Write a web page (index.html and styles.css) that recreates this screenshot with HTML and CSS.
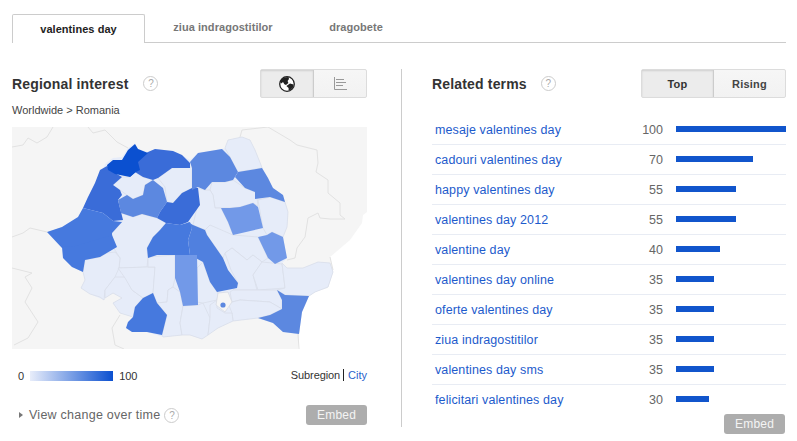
FILE: index.html
```html
<!DOCTYPE html>
<html lang="en">
<head>
<meta charset="utf-8">
<title>Interest</title>
<link rel="stylesheet" href="styles.css">
</head>
<body>
<div class="tabs">
  <div class="tab active">valentines day</div>
  <div class="tab second">ziua indragostitilor</div>
  <div class="tab third">dragobete</div>
</div>
<div class="panels">
  <section class="left">
    <div class="head">
      <h2>Regional interest</h2>
      <span class="help help-head">?</span>
      <div class="toggle toggle-map">
        <div class="seg seg-on seg-icon">
          <svg width="16" height="16" viewBox="0 0 16 16"><circle cx="8" cy="8" r="7.3" fill="#fff" stroke="#222" stroke-width="1.3"/><path d="M2 4 5 1.4 9.5 1 10 3 8.6 5 9.4 7 7 9 5.4 8.2 4 6 2.4 7.4 1.4 6Z" fill="#222"/><path d="M7.4 10 11 7.6 14.6 8.4 14 11.6 11.4 14 9.6 14.6 9.6 12Z" fill="#222"/></svg>
        </div>
        <div class="seg seg-icon">
          <svg width="13" height="13" viewBox="0 0 13 13"><path d="M.5 0V12.5H13M2 2.5H10M2 5.5H12M2 8.5H9" fill="none" stroke="#999" stroke-width="1"/></svg>
        </div>
      </div>
    </div>
    <div class="crumb">Worldwide &gt; Romania</div>
    <svg class="map" width="355" height="222" viewBox="12 127 355 222">
      <rect x="12" y="127" width="355" height="222" fill="#f5f5f5"/>
      <path class="sea" d="M367 212 363 215 362 223 350 240 330 257 333 270 328 288 315 292 309 296 302 312 299 334 298 349H367Z"/>
      <g class="borders">
        <path d="M12 147 23 145 28 138 37 143 47 137 53 127"/>
        <path d="M88 127 93 133 105 130 117 142 128 148"/>
        <path d="M12 237 23 233 30 228 47 232"/>
        <path d="M240 137 242 130 268 127 290 140 297 145 317 150 318 163 316 172 328 180 328 193 340 203 340 215 345 219 330 219 320 218 318 213 308 218 305 237 297 248 295 258 287 260"/>
        <path d="M12 268 32 273 25 277 32 288 25 302 38 322 28 338 14 345"/>
        <path d="M120 315 112 328 115 345 124 349"/>
        <path d="M298 334 299 349"/>
        <path d="M330 257 333 270"/>
      </g>
      <path class="base" d="M106 163 113 158 122 157 128 148 135 143 138 149 148 152 155 149 173 151 182 155 190 160 198 153 222 149 225 148 228 140 242 137 250 140 255 150 261 165 268 178 273 188 283 195 285 202 288 212 287 227 283 237 287 258 282 263 287 268 303 268 318 262 330 263 333 272 328 287 315 292 309 296 302 312 299 334 283 332 273 323 258 318 233 321 218 328 208 335 202 339 190 335 182 335 163 337 147 332 132 332 126 328 128 322 133 317 120 313 113 303 122 298 113 293 105 298 104 300 90 294 81 288 85 280 83 272 72 267 63 258 62 248 47 232 62 227 78 217 83 208 88 197 95 183 102 170Z"/>
      <g class="light">
        <path d="M113 185 122 177 130 177 135 172 143 177 153 180 145 185 143 195 133 199 127 195 120 190Z"/>
        <path d="M158 178 172 168 192 167 192 188 182 193 173 203 167 202 165 187Z"/>
        <path d="M225 148 228 140 242 137 250 140 255 150 261 165 262 168 238 172 230 157Z"/>
        <path d="M210 190 212 182 225 182 233 180 245 188 255 192 257 198 258 206 253 203 240 207 230 208 221 208 215 208 213 195Z"/>
        <path d="M258 200 270 197 285 202 288 212 287 227 283 237 272 232 267 235 263 228Z"/>
        <path d="M198 188 205 190 210 190 213 195 215 208 221 208 228 222 233 235 207 235 210 225 205 230 193 225 198 203Z"/>
        <path d="M205 230 210 225 233 235 258 237 268 258 262 262 253 255 247 260 232 248 225 253 223 258 207 235Z"/>
        <path d="M121 213 133 217 142 214 157 218 166 223 160 230 153 237 147 248 148 258 147 267 119 268 120 258 113 247 112 233 122 222Z"/>
        <path d="M85 260 100 257 107 253 115 252 120 258 119 268 115 277 105 290 104 300 100 297 90 294 81 288 85 280 83 272Z"/>
        <path d="M115 277 125 277 132 290 143 298 135 307 133 317 120 313 113 303 122 298 113 293 105 298 105 290Z"/>
        <path d="M118 268 147 267 155 267 153 293 143 298 132 290 125 278Z"/>
        <path d="M148 267 148 257 175 255 175 278 173 287 168 290 167 302 157 303 153 293 155 267Z"/>
        <path d="M157 303 167 302 168 290 173 287 180 292 183 306 180 323 182 335 163 337 162 335 167 315Z"/>
        <path d="M183 306 198 305 203 303 210 318 208 335 202 339 190 335 182 335 180 323Z"/>
        <path d="M197 268 203 262 210 282 217 292 218 293 217 300 203 303 197 302Z"/>
        <path d="M231 270 225 253 232 248 247 260 253 255 262 262 253 275 257 290 233 290 238 283Z"/>
        <path d="M253 275 262 262 282 264 285 288 258 290Z"/>
        <path d="M282 263 287 268 303 268 318 262 330 263 333 272 328 287 315 292 309 296 285 295 277 290 285 288Z"/>
        <path d="M230 292 233 290 277 290 282 300 282 309 270 302 240 300 232 302Z"/>
        <path d="M228 303 232 302 240 300 270 302 282 309 270 315 258 318 233 321 232 313Z"/>
        <path d="M210 305 217 300 217 308 225 313 232 313 233 321 218 328 208 335 210 318Z"/>
      </g>
      <path class="city" d="M216 305 218 293 228 292 232 302 225 312Z"/>
      <circle class="c60" cx="223" cy="305" r="2.6"/>
      <path class="c80" d="M148 152 155 149 173 151 182 155 190 163 190 168 172 168 158 178 153 180 143 177 135 172 130 177 137 160Z"/>
      <path class="c80" d="M100 170 107 166 115 173 122 177 113 185 120 190 122 195 118 200 123 220 113 221 103 213 83 208 88 197 95 183Z"/>
      <path class="c100" d="M107 165 113 160 122 160 128 150 135 144 138 149 148 153 138 162 140 170 136 172 130 177 115 174 108 170Z"/>
      <path class="c70" d="M83 208 103 213 113 221 122 222 112 233 112 236 75 247 62 248 47 232 62 227 78 217Z"/>
      <path class="c70" d="M62 247 75 246 112 235 117 247 100 257 85 260 83 272 72 267 63 258Z"/>
      <path class="c60" d="M118 200 127 195 133 199 143 195 145 185 153 180 163 188 167 202 160 212 157 218 142 214 133 217 121 213Z"/>
      <path class="c80" d="M160 212 167 202 173 203 182 193 192 188 198 188 200 205 188 222 180 225 166 223 157 218Z"/>
      <path class="c70" d="M166 223 180 225 190 222 192 228 188 240 190 255 177 255 157 255 148 258 147 248 153 237 160 230Z"/>
      <path class="c65" d="M188 222 193 225 205 230 207 235 223 258 228 270 238 283 237 288 217 292 210 282 203 262 190 255 188 240 192 228Z"/>
      <path class="c60" d="M190 162 198 153 222 149 230 157 238 172 233 180 225 182 212 182 205 190 198 187 192 190 192 168Z"/>
      <path class="c60" d="M238 172 262 168 268 178 273 188 283 195 285 202 270 197 255 199 255 192 245 188 235 177Z"/>
      <path class="c45" d="M221 208 230 208 240 207 253 203 258 207 263 228 233 235 228 222Z"/>
      <path class="c45" d="M258 237 267 235 272 232 283 237 287 258 275 264 268 258Z"/>
      <path class="c45" d="M175 255 197 255 198 305 183 306 180 292 175 278Z"/>
      <path class="c70" d="M153 293 157 303 167 315 162 335 147 332 132 332 126 328 128 322 133 317 135 307 143 298Z"/>
      <path class="c60" d="M277 290 285 295 309 296 302 312 299 334 283 332 273 323 258 318 270 315 282 309 282 300Z"/>
    </svg>
    <div class="legend">
      <span class="num">0</span>
      <span class="scale"></span>
      <span class="num">100</span>
      <span class="levels"><span class="level">Subregion</span><a class="city-link">City</a></span>
    </div>
    <div class="foot">
      <span class="tri"></span>
      <span class="change">View change over time</span>
      <span class="help help-foot">?</span>
      <span class="embed embed-left">Embed</span>
    </div>
  </section>
  <section class="right">
    <div class="head head-right">
      <h2>Related terms</h2>
      <span class="help help-head help-right">?</span>
      <div class="toggle toggle-terms">
        <div class="seg seg-on seg-top">Top</div>
        <div class="seg seg-rising">Rising</div>
      </div>
    </div>
    <div class="terms">
      <div class="term"><a>mesaje valentines day</a><span class="val">100</span><span class="bar-wrap"><span class="bar" style="width:110px"></span></span></div>
      <div class="term"><a>cadouri valentines day</a><span class="val">70</span><span class="bar-wrap"><span class="bar" style="width:77px"></span></span></div>
      <div class="term"><a>happy valentines day</a><span class="val">55</span><span class="bar-wrap"><span class="bar" style="width:60px"></span></span></div>
      <div class="term"><a>valentines day 2012</a><span class="val">55</span><span class="bar-wrap"><span class="bar" style="width:60px"></span></span></div>
      <div class="term"><a>valentine day</a><span class="val">40</span><span class="bar-wrap"><span class="bar" style="width:44px"></span></span></div>
      <div class="term"><a>valentines day online</a><span class="val">35</span><span class="bar-wrap"><span class="bar" style="width:38px"></span></span></div>
      <div class="term"><a>oferte valentines day</a><span class="val">35</span><span class="bar-wrap"><span class="bar" style="width:38px"></span></span></div>
      <div class="term"><a>ziua indragostitilor</a><span class="val">35</span><span class="bar-wrap"><span class="bar" style="width:38px"></span></span></div>
      <div class="term"><a>valentines day sms</a><span class="val">35</span><span class="bar-wrap"><span class="bar" style="width:38px"></span></span></div>
      <div class="term last"><a>felicitari valentines day</a><span class="val">30</span><span class="bar-wrap"><span class="bar" style="width:33px"></span></span></div>
    </div>
    <div class="right-foot"><span class="embed">Embed</span></div>
  </section>
</div>
</body>
</html>
```
FILE: styles.css
```css
html, body { margin: 0; padding: 0; background: #fff; }
body {
  width: 797px;
  height: 441px;
  overflow: hidden;
  font-family: "Liberation Sans", Arial, sans-serif;
  color: #333;
}
.tabs {
  display: flex;
  margin: 14px 11px 0 12px;
  height: 29px;
  box-sizing: border-box;
  border-bottom: 1px solid #ccc;
}
.tab {
  height: 28px;
  line-height: 27px;
  font-size: 11px;
  font-weight: bold;
  letter-spacing: .05px;
  color: #777;
  text-align: center;
}
.tab.active {
  box-sizing: border-box;
  width: 133px;
  height: 29px;
  color: #222;
  background: #fff;
  border: 1px solid #ccc;
  border-bottom: 0;
  border-radius: 2px 2px 0 0;
  line-height: 28px;
}
.tab.second { width: 156px; }
.tab.third { width: 110px; }
.panels { display: flex; margin-left: 12px; margin-top: 26px; }
.left {
  box-sizing: border-box;
  width: 390px;
  height: 358px;
  padding-right: 34px;
  border-right: 1px solid #ccc;
}
.right { width: 354px; margin-left: 30px; }
.head { display: flex; align-items: center; height: 29px; }
h2 {
  margin: 0;
  font-size: 14px;
  font-weight: bold;
  letter-spacing: .17px;
  color: #333;
}
.help {
  box-sizing: border-box;
  display: inline-block;
  width: 15px;
  height: 15px;
  border: 1px solid #ccc;
  border-radius: 50%;
  font-size: 10px;
  line-height: 13px;
  text-align: center;
  color: #aaa;
}
.help-head { margin-left: 15px; }
.help-right { margin-left: 14px; }
.toggle {
  display: flex;
  margin-left: auto;
  height: 29px;
  box-sizing: border-box;
  border: 1px solid #dcdcdc;
  border-radius: 2px;
  background: linear-gradient(#f6f6f6, #f2f2f2);
}
.seg {
  display: flex;
  align-items: center;
  justify-content: center;
  font-size: 11px;
  font-weight: bold;
  letter-spacing: .2px;
  color: #444;
}
.seg-on {
  background: #ececec;
  box-shadow: inset 0 1px 2px rgba(0,0,0,.12);
  border-right: 1px solid #ccc;
  color: #333;
}
.toggle-map .seg-on { width: 52px; }
.toggle-map .seg:last-child { width: 52px; }
.toggle-terms .seg-top { width: 71px; }
.toggle-terms .seg-rising { width: 71px; }
.crumb { margin-top: 5px; font-size: 11px; line-height: 14px; color: #444; height: 14px; }
.map { display: block; margin-top: 10px; filter: blur(.35px); }
.sea { fill: #fff; }
.borders path { fill: none; stroke: #e2e2e2; stroke-width: 1; }
.base { fill: #e6ecf9; }
.light path { fill: #e6ecf9; stroke: #d9deea; stroke-width: .8; stroke-linejoin: round; }
.city { fill: #f5f5f5; stroke: #d8dce4; stroke-width: .8; }
.c100 { fill: #0b50d0; }
.c80 { fill: #3a6cd8; }
.c70 { fill: #4679de; }
.c65 { fill: #5080df; }
.c60 { fill: #5c88e0; }
.c45 { fill: #7299e8; }
.legend {
  display: flex;
  align-items: center;
  height: 14px;
  margin-top: 20px;
  padding-left: 6px;
  font-size: 11px;
  color: #333;
}
.scale {
  width: 83px;
  height: 10px;
  margin: 0 6px 0 6px;
  background: linear-gradient(to right, #e8edfa, #0b50d0);
}
.num:last-of-type { letter-spacing: -.2px; }
.levels { margin-left: auto; display: flex; align-items: center; margin-top: -3px; }
.level { padding-right: 3px; border-right: 1px solid #222; line-height: 12px; letter-spacing: -.1px; }
.city-link { padding-left: 4px; color: #2a62cc; }
.foot { display: flex; align-items: center; height: 20px; margin-top: 22px; padding-left: 7px; }
.tri {
  width: 0;
  height: 0;
  border-left: 4px solid #777;
  border-top: 3.5px solid transparent;
  border-bottom: 3.5px solid transparent;
}
.change { margin-left: 6px; font-size: 12.5px; color: #666; letter-spacing: .25px; }
.help-foot { margin-left: 4px; }
.embed {
  display: block;
  box-sizing: border-box;
  width: 61px;
  height: 20px;
  line-height: 20px;
  text-align: center;
  font-size: 12px;
  background: #adadad;
  color: #f4f4f4;
  border-radius: 3px;
  letter-spacing: .2px;
}
.embed-left { margin-left: auto; }
.terms { margin-top: 17px; }
.term {
  display: flex;
  align-items: center;
  height: 30px;
  box-sizing: border-box;
  border-bottom: 1px solid #e8ecf4;
  padding-left: 3px;
  padding-top: 1px;
  padding-bottom: 1px;
}
.term.last { border-bottom: 0; }
.term a { width: 190px; font-size: 12.5px; color: #1d5bcc; letter-spacing: .11px; }
.val { width: 38px; text-align: right; font-size: 12.5px; color: #666; }
.bar-wrap { margin-left: 13px; display: flex; margin-top: -2px; }
.bar { display: block; height: 6px; background: #1155cc; }
.right-foot { display: flex; justify-content: flex-end; margin-right: 1px; margin-top: -1px; }
```
